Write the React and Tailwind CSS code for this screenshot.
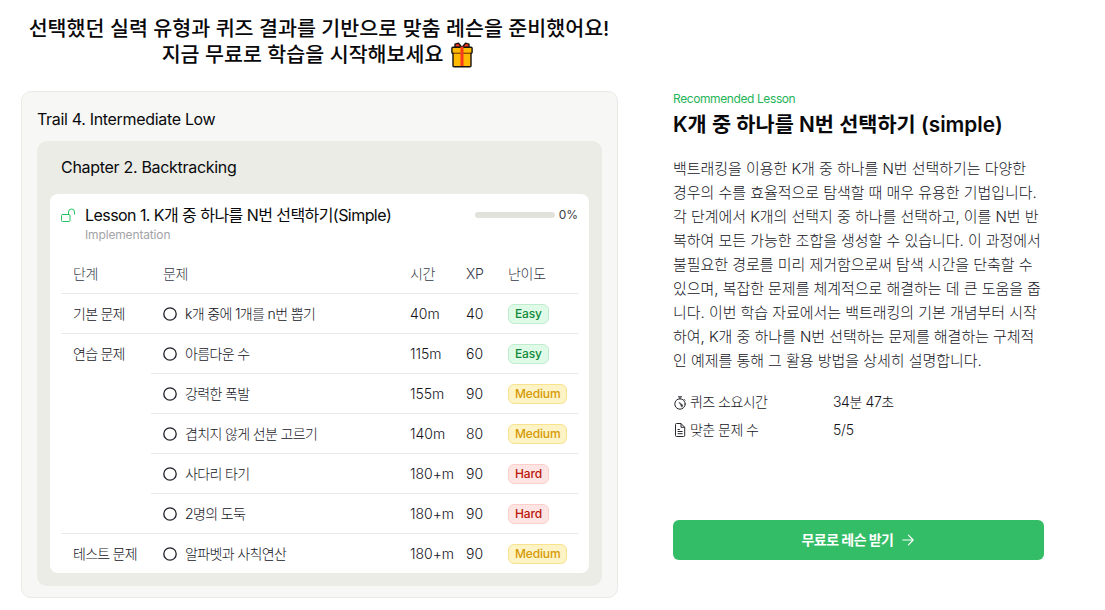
const problems = [
  { stage: '기본 문제', span: 1, title: 'k개 중에 1개를 n번 뽑기', time: '40m', xp: 40, level: 'Easy' },
  { stage: '연습 문제', span: 5, title: '아름다운 수', time: '115m', xp: 60, level: 'Easy' },
  { title: '강력한 폭발', time: '155m', xp: 90, level: 'Medium' },
  { title: '겹치지 않게 선분 고르기', time: '140m', xp: 80, level: 'Medium' },
  { title: '사다리 타기', time: '180+m', xp: 90, level: 'Hard' },
  { title: '2명의 도둑', time: '180+m', xp: 90, level: 'Hard' },
  { stage: '테스트 문제', span: 1, title: '알파벳과 사칙연산', time: '180+m', xp: 90, level: 'Medium' },
];

const levelStyles = {
  Easy: 'bg-[#dffbe8] border-[#bfeccf] text-[#128a3a]',
  Medium: 'bg-[#fdf3c4] border-[#f7e28e] text-[#d69a05]',
  Hard: 'bg-[#fee4e2] border-[#fccfcb] text-[#b91408]',
};

const description = [
  '백트래킹을 이용한 K개 중 하나를 N번 선택하기는 다양한',
  '경우의 수를 효율적으로 탐색할 때 매우 유용한 기법입니다.',
  '각 단계에서 K개의 선택지 중 하나를 선택하고, 이를 N번 반',
  '복하여 모든 가능한 조합을 생성할 수 있습니다. 이 과정에서',
  '불필요한 경로를 미리 제거함으로써 탐색 시간을 단축할 수',
  '있으며, 복잡한 문제를 체계적으로 해결하는 데 큰 도움을 줍',
  '니다. 이번 학습 자료에서는 백트래킹의 기본 개념부터 시작',
  '하여, K개 중 하나를 N번 선택하는 문제를 해결하는 구체적',
  '인 예제를 통해 그 활용 방법을 상세히 설명합니다.',
];

function GiftIcon() {
  return (
    <svg className="w-[22px] h-[26px]" viewBox="0 0 22 26" stroke="#171310" strokeWidth="1.4" strokeLinejoin="round">
      <path d="M11 5.5 7.5 1.2 4 2.2V5.5ZM11 5.5 14.5 1.2 18 2.2V5.5Z" fill="#fb3a1d" />
      <path d="M2 11h18v12.8q0 1-1 1H3q-1 0-1-1Z" fill="#ffb900" />
      <rect x="0.9" y="5.3" width="20.2" height="5.9" rx="1" fill="#ffb900" stroke="#171310" />
      <path d="M2.6 10.8h16.8" stroke="#d98b00" strokeWidth="1.6" />
      <path d="M9.5 4.6h3v19.4h-3z" fill="#fb3a1d" stroke="none" />
    </svg>
  );
}

function UnlockIcon() {
  return (
    <svg className="mt-[5px] w-[15px] h-[15px]" viewBox="0 0 15 15" fill="none" stroke="#25c463" strokeLinecap="round">
      <rect x="0.5" y="6.5" width="8.5" height="7" rx="1" />
      <path d="M7.5 6.5V4a3 3 0 0 1 6 0v2.2" />
    </svg>
  );
}

function StopwatchIcon() {
  return (
    <svg className="mt-px w-3.5 h-3.5" viewBox="0 0 14 14" fill="none" stroke="#27272f" strokeLinecap="round">
      <circle cx="7" cy="8" r="5.2" />
      <path d="M5.4 0.8h3.2M7 1v1.8M11.1 3.4l0.8 0.8" />
      <path d="M6.3 6.4 9.8 9.2 9 11Z" fill="#27272f" strokeWidth="0.5" />
    </svg>
  );
}

function DocumentIcon() {
  return (
    <svg className="w-3.5 h-3.5" viewBox="0 0 14 14" fill="none" stroke="#27272f" strokeLinejoin="round">
      <path d="M2.5 1.5q0-1 1-1H8l3.7 3.8v8.2q0 1-1 1H3.5q-1 0-1-1ZM8 0.5v3.8h3.7" />
      <path d="M4.6 6.5h2.2M4.6 8.5h5M4.6 10.7h5" />
    </svg>
  );
}

function ArrowIcon() {
  return (
    <svg className="w-3 h-3" viewBox="0 0 12 12" fill="none" stroke="white" strokeWidth="1.1" strokeLinecap="round" strokeLinejoin="round">
      <path d="M0.8 6h10.4M6.4 1.2 11.2 6l-4.8 4.8" />
    </svg>
  );
}

function ProblemTable() {
  return (
    <table className="w-[517px] table-fixed border-separate border-spacing-0 text-sm text-[#14141c]">
      <colgroup>
        <col className="w-[90px]" />
        <col className="w-[247px]" />
        <col className="w-[56px]" />
        <col className="w-[42px]" />
        <col className="w-[82px]" />
      </colgroup>
      <thead>
        <tr className="h-10 text-left text-[#363948]">
          {['단계', '문제', '시간', 'XP', '난이도'].map((label) => (
            <th key={label} className="border-b border-[#e9e9e9] p-0 pl-3 font-light leading-5 tracking-[-0.3px]">{label}</th>
          ))}
        </tr>
      </thead>
      <tbody className="[&>tr:last-child>td]:border-b-0">
        {problems.map((p, i) => {
          const cell = 'border-b border-[#e9e9e9] p-0 pl-3 font-light leading-5 whitespace-nowrap';
          return (
            <tr key={p.title} className={i === problems.length - 1 ? 'h-[39px]' : 'h-10'}>
              {p.stage && (
                <td rowSpan={p.span} className={`${cell} align-top pt-[10px] tracking-[-0.75px]`}>{p.stage}</td>
              )}
              <td className={`${cell} tracking-[-0.65px]`}>
                <div className="flex items-center gap-2">
                  <span className="flex w-3.5 h-3.5 shrink-0">
                    <svg className="w-3.5 h-3.5" viewBox="0 0 14 14" fill="none" stroke="#1c1c26" strokeWidth="1.3">
                      <circle cx="7" cy="7" r="6.2" />
                    </svg>
                  </span>
                  {p.title}
                </div>
              </td>
              <td className={cell}>{p.time}</td>
              <td className={cell}>{p.xp}</td>
              <td className={cell}>
                <span className={`flex h-5 w-fit items-center rounded-md border px-1.5 text-xs font-medium tracking-[-0.15px] ${levelStyles[p.level]}`}>
                  {p.level}
                </span>
              </td>
            </tr>
          );
        })}
      </tbody>
    </table>
  );
}

function TrailCard() {
  return (
    <section className="mt-[22px] h-[507px] rounded-[10px] border border-[#e9e9e6] bg-[#f7f7f6] px-[15px] pt-[15px]">
      <h2 className="h-[34px] leading-6 tracking-[-0.32px]">Trail 4. Intermediate Low</h2>
      <div className="h-[445px] rounded-[10px] bg-[#ebece6] px-[13px] pt-[14px]">
        <h3 className="h-[39px] pl-[11px] leading-6 tracking-[-0.3px]">Chapter 2. Backtracking</h3>
        <div className="h-[379px] rounded-lg bg-white px-[11px]">
          <div className="flex h-[60px] pt-[9px]">
            <UnlockIcon />
            <div className="ml-[9px] flex-1">
              <p className="leading-6 tracking-[-0.56px] whitespace-nowrap">Lesson 1. K개 중 하나를 N번 선택하기(Simple)</p>
              <p className="text-xs leading-4 tracking-[-0.15px] text-[#a3a3a8]">Implementation</p>
            </div>
            <div className="flex h-6 items-center gap-1">
              <span className="w-20 h-1.5 rounded-full bg-[#e1e2dc]" />
              <span className="text-xs text-[#3c3c44]">0%</span>
            </div>
          </div>
          <ProblemTable />
        </div>
      </div>
    </section>
  );
}

function LessonSummary() {
  return (
    <section className="w-[371px] pt-[91px]">
      <p className="text-xs leading-4 tracking-[-0.4px] text-[#1fb457]">Recommended Lesson</p>
      <h2 className="mt-1 text-[20.8px] font-semibold leading-7 whitespace-nowrap">K개 중 하나를 N번 선택하기 (simple)</h2>
      <p className="mt-[18px] text-[15px] font-light leading-6 tracking-[-0.04px] text-[#14141c] whitespace-nowrap">
        {description.map((line) => (
          <span key={line} className="block">{line}</span>
        ))}
      </p>
      <dl className="mt-[15px] grid grid-cols-[160px_1fr] text-sm font-light leading-7 tracking-[-0.55px] text-[#14141c]">
        <dt className="flex items-center gap-[3px]"><StopwatchIcon />퀴즈 소요시간</dt>
        <dd className="tracking-[-0.4px]">34분 47초</dd>
        <dt className="flex items-center gap-[3px]"><DocumentIcon />맞춘 문제 수</dt>
        <dd className="tracking-[-0.2px]">5/5</dd>
      </dl>
      <button className="mt-[76px] flex h-10 w-full items-center justify-center gap-[9px] rounded-md bg-[#33bd66] pr-px text-sm font-semibold tracking-[-0.6px] text-white">
        무료로 레슨 받기
        <ArrowIcon />
      </button>
    </section>
  );
}

export default function App() {
  return (
    <main className="flex h-[610px] gap-[55px] overflow-hidden bg-white pl-[21px] font-['Inter','Noto_Sans_CJK_KR',sans-serif] text-[#09090b]">
      <div className="w-[597px] pt-4">
        <h1 className="-ml-px h-[53px] text-center text-[20.6px] font-medium leading-[26px] whitespace-nowrap">
          선택했던 실력 유형과 퀴즈 결과를 기반으로 맞춤 레슨을 준비했어요!
          <span className="flex items-center justify-center gap-2 pr-[3px]">
            지금 무료로 학습을 시작해보세요
            <GiftIcon />
          </span>
        </h1>
        <TrailCard />
      </div>
      <LessonSummary />
    </main>
  );
}
